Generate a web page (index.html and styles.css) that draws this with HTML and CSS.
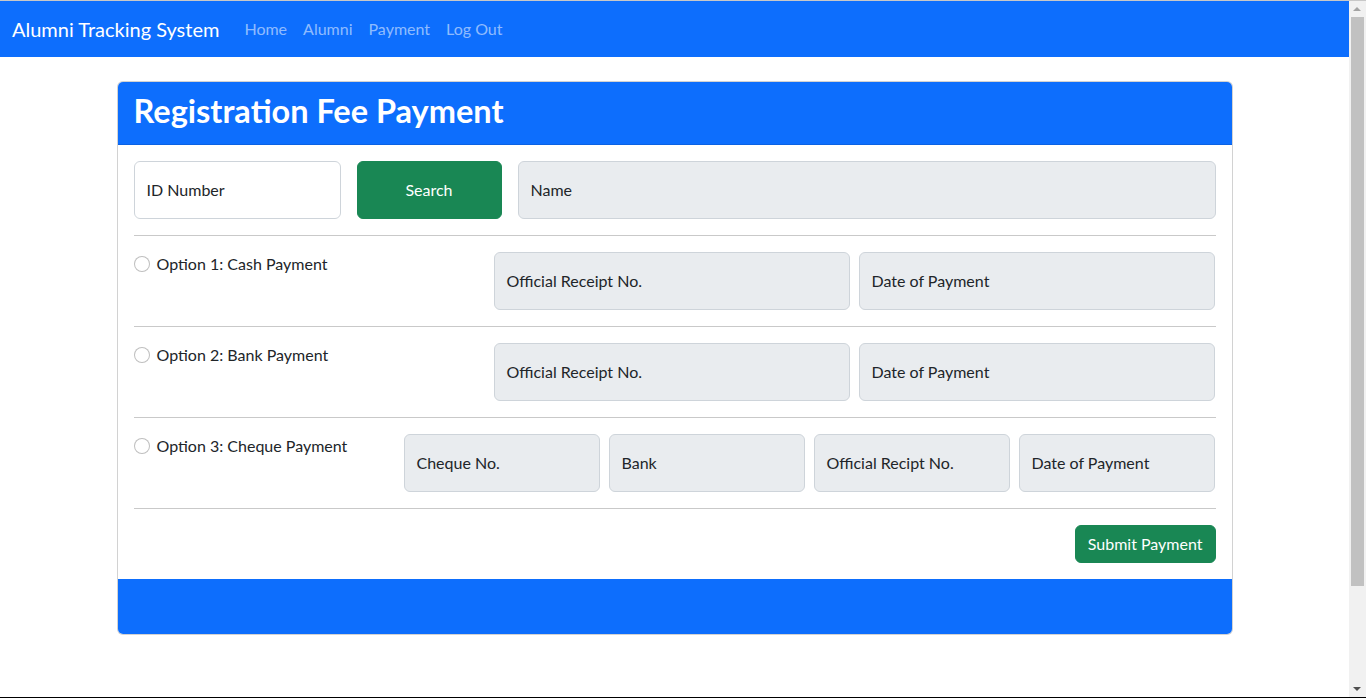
FILE: index.html
```html
<!DOCTYPE html>
<html lang="en">
<head>
<meta charset="utf-8">
<title>Registration Fee Payment</title>
<link rel="stylesheet" href="styles.css">
</head>
<body>
<nav class="navbar">
  <div class="navbar-inner">
    <a class="brand" href="#">Alumni Tracking System</a>
    <ul class="nav">
      <li><a class="nav-link" href="#">Home</a></li>
      <li><a class="nav-link" href="#">Alumni</a></li>
      <li><a class="nav-link" href="#">Payment</a></li>
      <li><a class="nav-link" href="#">Log Out</a></li>
    </ul>
  </div>
</nav>
<main class="container">
  <div class="card">
    <div class="card-header">
      <h1>Registration Fee Payment</h1>
    </div>
    <div class="card-body">
      <div class="search-row">
        <div class="field field-id"><span class="field-label">ID Number</span></div>
        <button class="btn btn-search" type="button">Search</button>
        <div class="field field-grow readonly"><span class="field-label">Name</span></div>
      </div>
      <hr class="divider">
      <div class="option-row">
        <label class="check check-wide"><span class="radio"></span>Option 1: Cash Payment</label>
        <div class="fields fields-2">
          <div class="field readonly"><span class="field-label">Official Receipt No.</span></div>
          <div class="field readonly"><span class="field-label">Date of Payment</span></div>
        </div>
      </div>
      <hr class="divider">
      <div class="option-row">
        <label class="check check-wide"><span class="radio"></span>Option 2: Bank Payment</label>
        <div class="fields fields-2">
          <div class="field readonly"><span class="field-label">Official Receipt No.</span></div>
          <div class="field readonly"><span class="field-label">Date of Payment</span></div>
        </div>
      </div>
      <hr class="divider">
      <div class="option-row">
        <label class="check check-narrow"><span class="radio"></span>Option 3: Cheque Payment</label>
        <div class="fields fields-4">
          <div class="field readonly"><span class="field-label">Cheque No.</span></div>
          <div class="field readonly"><span class="field-label">Bank</span></div>
          <div class="field readonly"><span class="field-label">Official Recipt No.</span></div>
          <div class="field readonly"><span class="field-label">Date of Payment</span></div>
        </div>
      </div>
      <hr class="divider">
      <div class="submit-row">
        <button class="btn btn-submit" type="button">Submit Payment</button>
      </div>
    </div>
    <div class="card-footer"></div>
  </div>
</main>
<div class="scrollbar" aria-hidden="true">
  <span class="scroll-arrow scroll-up"></span>
  <span class="scroll-thumb"></span>
  <span class="scroll-arrow scroll-down"></span>
</div>
<div class="frame-bottom" aria-hidden="true"></div>
</body>
</html>
```

FILE: styles.css
```css
* { box-sizing: border-box; }

html {
  border-top: 1px solid #c8c8c8;
  padding-right: 17px;
}

body {
  margin: 0;
  font-family: "Segoe UI", Lato, "Open Sans", sans-serif;
  font-size: 16px;
  line-height: 1.5;
  color: #212529;
  background: #fff;
}

.navbar {
  background: #0d6efd;
  height: 56px;
  padding: 8px 0;
}

.navbar-inner {
  display: flex;
  align-items: center;
  height: 40px;
  padding: 0 12px;
}

.brand {
  font-size: 20px;
  color: #fff;
  text-decoration: none;
  margin-right: 17px;
  line-height: 30px;
}

.nav {
  display: flex;
  list-style: none;
  margin: 0;
  padding: 0;
}

.nav-link {
  display: block;
  padding: 8px;
  color: rgba(255, 255, 255, 0.55);
  text-decoration: none;
}

.container {
  max-width: 1140px;
  margin: 24px auto 0;
  padding: 0 12px;
}

.card {
  border: 1px solid rgba(0, 0, 0, 0.175);
  border-radius: 6px;
  overflow: hidden;
  background: #fff;
}

.card-header {
  background: #0d6efd;
  color: #fff;
  padding: 8px 16px;
  border-bottom: 1px solid rgba(0, 0, 0, 0.1);
}

.card-header h1 {
  margin: 0;
  font-size: 32.5px;
  font-weight: 700;
  line-height: 42px;
  padding-bottom: 4px;
}

.card-body {
  padding: 16px;
}

.search-row {
  display: flex;
  gap: 16px;
}

.field {
  height: 58px;
  border: 1px solid #ced4da;
  border-radius: 6px;
  background: #fff;
  padding: 16px 12px;
  display: flex;
  align-items: center;
}

.field.readonly {
  background: #e9ecef;
}

.field-label {
  line-height: 24px;
  white-space: nowrap;
}

.field-id { width: 207px; }
.field-grow { flex: 1; }

.btn {
  font-family: inherit;
  font-size: 16px;
  line-height: 24px;
  border: 1px solid #198754;
  background: #198754;
  color: #fff;
  border-radius: 6px;
  cursor: pointer;
}

.btn-search {
  width: 145px;
  height: 58px;
}

.divider {
  margin: 16px 0;
  border: 0;
  border-top: 1px solid #c9c9c9;
}

.option-row {
  display: flex;
}

.check {
  display: flex;
  align-items: flex-start;
  gap: 7px;
  line-height: 24px;
}

.check-wide { width: 360px; }
.check-narrow { width: 270px; }

.radio {
  width: 16px;
  height: 16px;
  margin-top: 4px;
  border: 1px solid rgba(0, 0, 0, 0.25);
  border-radius: 50%;
  background: #fff;
  flex: none;
}

.fields {
  flex: 1;
  display: grid;
  gap: 9px;
  margin-right: 1px;
}

.fields-2 { grid-template-columns: 1fr 1fr; }
.fields-4 { grid-template-columns: repeat(4, 1fr); }

.submit-row {
  display: flex;
  justify-content: flex-end;
}

.btn-submit {
  height: 38px;
  padding: 6px 12px;
}

.card-footer {
  height: 55px;
  background: #0d6efd;
}

/* window chrome: vertical scrollbar drawn over the right edge */
.scrollbar {
  position: fixed;
  top: 1px;
  right: 0;
  bottom: 0;
  width: 17px;
  background: #f1f1f1;
}

.scroll-thumb {
  position: absolute;
  left: 2px;
  right: 2px;
  top: 16px;
  height: 569px;
  background: #c1c1c1;
}

.scroll-arrow {
  position: absolute;
  left: 4px;
  width: 0;
  height: 0;
  border-left: 4px solid transparent;
  border-right: 4px solid transparent;
}

.scroll-up {
  top: 6px;
  border-bottom: 4px solid #a3a3a3;
}

.scroll-down {
  bottom: 7px;
  border-top: 4px solid #505050;
}

.frame-bottom {
  position: fixed;
  left: 0;
  right: 0;
  bottom: 0;
  height: 1px;
  background: #000;
}
```
